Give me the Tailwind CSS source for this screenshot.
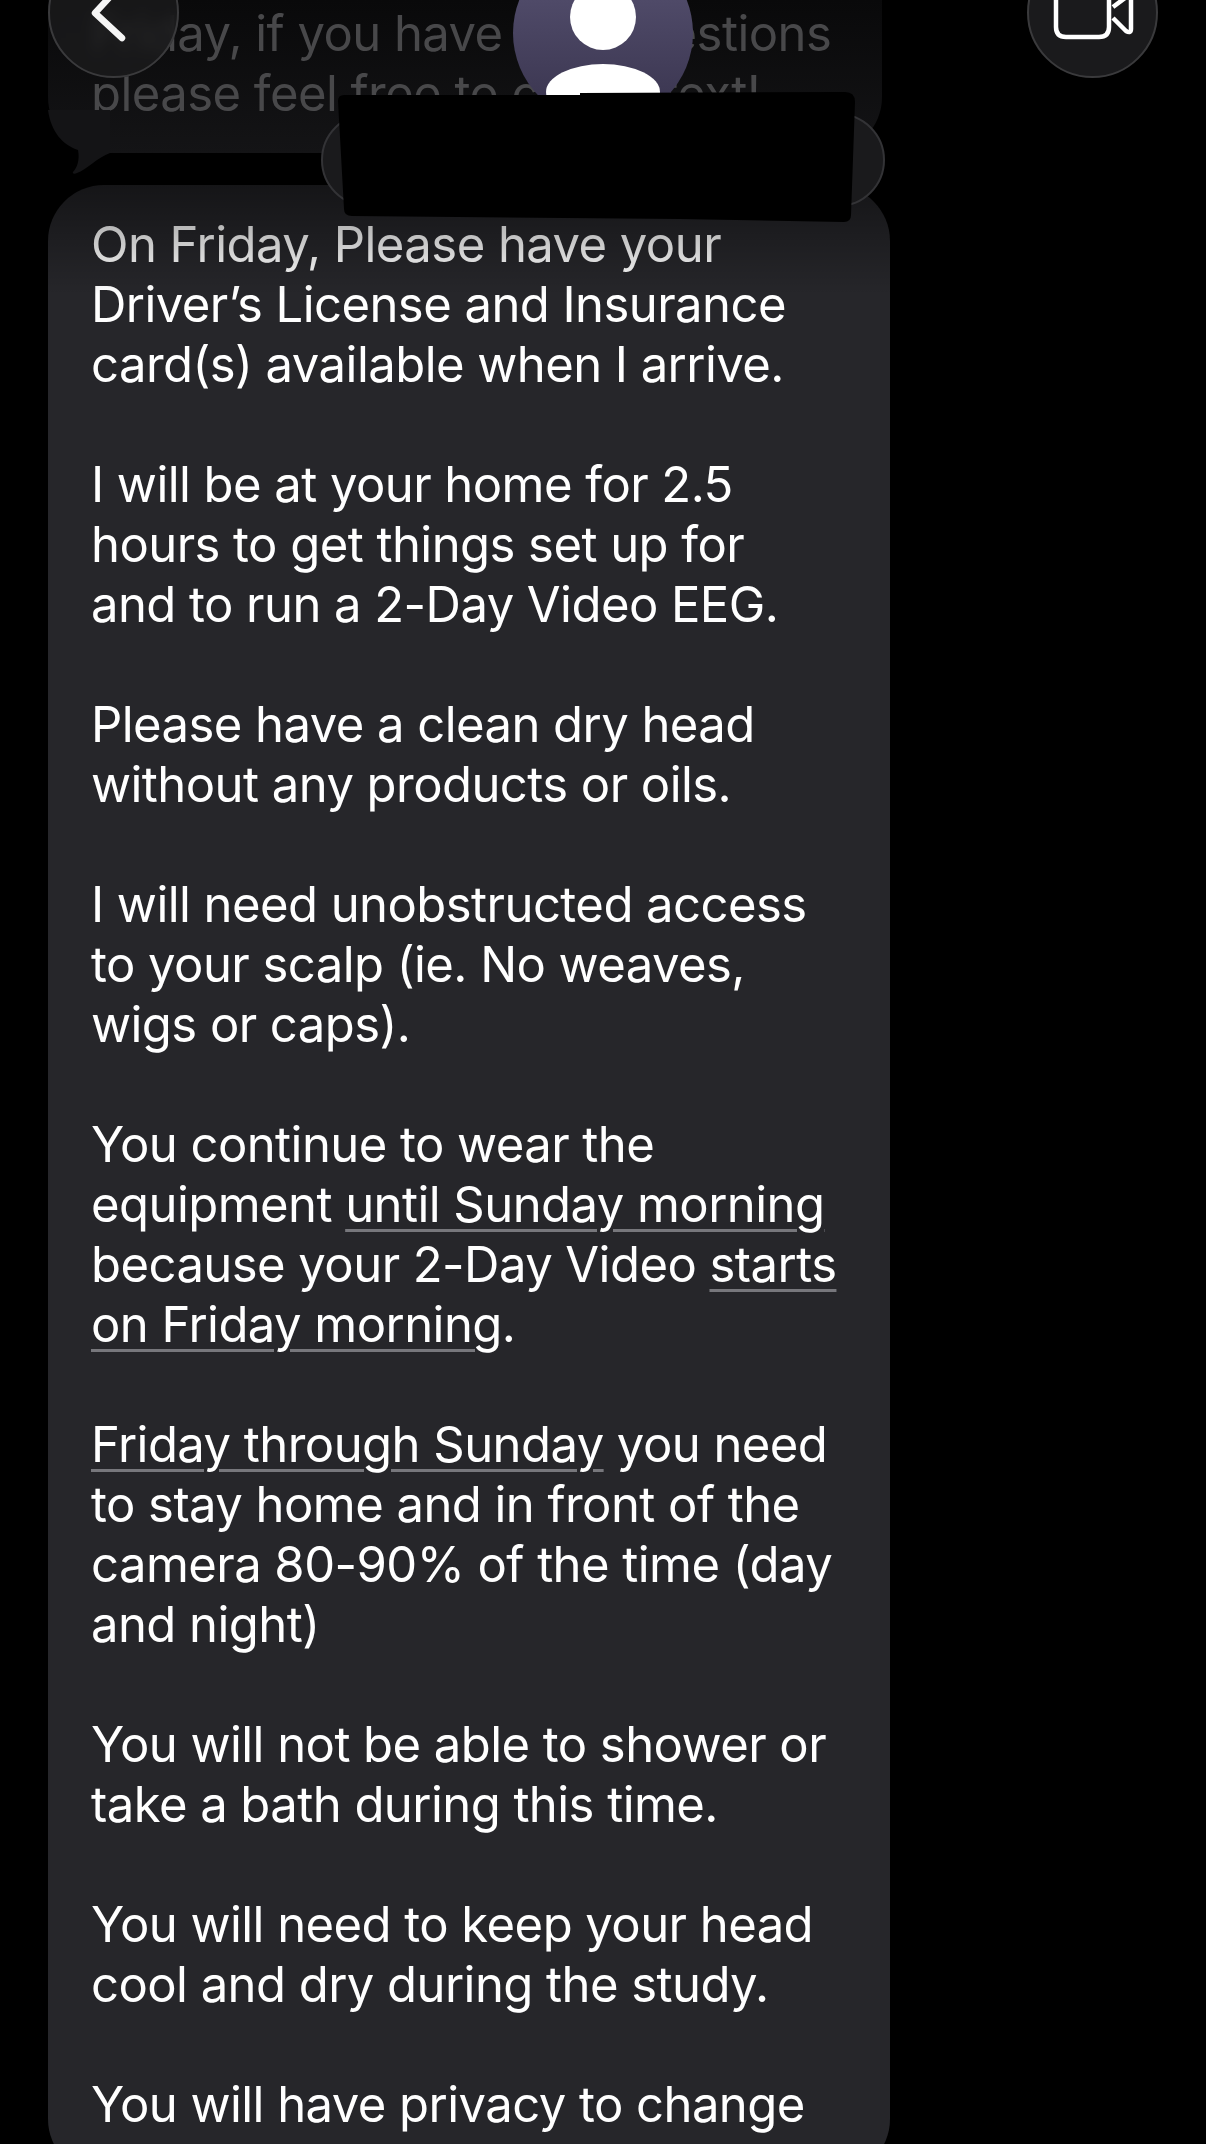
<!DOCTYPE html>
<html lang="en">
<head>
    <meta charset="UTF-8">
    <title>Messages</title>
    <script src="https://cdn.jsdelivr.net/npm/@tailwindcss/browser@4"></script>
</head>
<body class="bg-black">
<div class="relative w-[1206px] h-[2144px] overflow-hidden bg-black font-['Inter',sans-serif] text-[49px] leading-[60px] tracking-[-0.55px] whitespace-nowrap">

    <!-- previous message -->
    <div class="relative ml-[48px] w-[834px] h-[153px] flex flex-col justify-end pl-[43px] pb-[29px] bg-gradient-to-b from-[#09090a] to-[#141416] rounded-b-[56px] text-[#48484a]">
        <p>Friday, if you have any questions</p>
        <p>please feel free to call or text!</p>
        <svg class="absolute left-0 top-[110px]" width="70" height="66" viewBox="0 0 70 66"><path d="M0 0 C3 22 15 35 30 40 C32 50 29 58 25 62 C24 64 27 64 29 63 C38 60 50 47 62 43 L62 0 Z" fill="#141416"/></svg>
    </div>

    <!-- long message -->
    <div class="mt-[32px] ml-[48px] w-[842px] pl-[43px] pt-[30px] pb-[40px] bg-[#26262a] rounded-[56px] text-white">
        <p>On Friday, Please have your<br>Driver’s License and Insurance<br>card(s) available when I arrive.</p>
        <p class="mt-[60px]">I will be at your home for 2.5<br>hours to get things set up for<br>and to run a 2-Day Video EEG.</p>
        <p class="mt-[60px]">Please have a clean dry head<br>without any products or oils.</p>
        <p class="mt-[60px]">I will need unobstructed access<br>to your scalp (ie. No weaves,<br>wigs or caps).</p>
        <p class="mt-[60px]">You continue to wear the<br>equipment <span class="underline decoration-[#77777c] decoration-[3px] underline-offset-[7px]">until Sunday morning</span><br>because your 2-Day Video <span class="underline decoration-[#77777c] decoration-[3px] underline-offset-[7px]">starts</span><br><span class="underline decoration-[#77777c] decoration-[3px] underline-offset-[7px]">on Friday morning</span>.</p>
        <p class="mt-[60px]"><span class="underline decoration-[#77777c] decoration-[3px] underline-offset-[7px]">Friday through Sunday</span> you need<br>to stay home and in front of the<br>camera 80-90% of the time (day<br>and night)</p>
        <p class="mt-[60px]">You will not be able to shower or<br>take a bath during this time.</p>
        <p class="mt-[60px]">You will need to keep your head<br>cool and dry during the study.</p>
        <p class="mt-[60px]">You will have privacy to change</p>
    </div>

    <!-- fade under the nav bar -->
    <div class="absolute left-0 top-[185px] w-full h-[110px] bg-gradient-to-b from-black/45 to-black/0"></div>

    <!-- back button -->
    <div class="absolute left-[48px] top-[-53px] w-[131px] h-[131px] rounded-full bg-[#1c1c1e]/75 backdrop-blur-[7px] border-2 border-[#3a3a3c]"></div>
    <svg class="absolute left-[86px] top-0" width="46" height="46" viewBox="0 0 46 46"><path d="M34 -14 L9 13 L36 38" fill="none" stroke="#f5f5f5" stroke-width="6.5" stroke-linecap="round" stroke-linejoin="round"/></svg>

    <!-- avatar -->
    <div class="absolute left-[513px] top-[-57px] w-[180px] h-[180px] rounded-full overflow-hidden bg-gradient-to-b from-[#5a5575] to-[#38334d]">
        <div class="absolute left-[57px] top-[41px] w-[66px] h-[66px] rounded-full bg-white"></div>
        <div class="absolute left-[33px] top-[121px] w-[114px] h-[56px] rounded-[50%] bg-white"></div>
    </div>

    <!-- video button -->
    <div class="absolute left-[1027px] top-[-53px] w-[131px] h-[131px] rounded-full bg-[#1a1a1c] border-2 border-[#3a3a3c]"></div>
    <svg class="absolute left-[1050px] top-0" width="90" height="44" viewBox="0 0 90 44"><path d="M6 -10 L6 27 Q6 37 16 37 L49 37 Q59 37 59 27 L59 -10" fill="none" stroke="#fff" stroke-width="4.5"/><path d="M63 7 L75 -2 L81 -6 L81 29 Q81 34 76 31 L63 18" fill="none" stroke="#fff" stroke-width="4.5" stroke-linejoin="round"/></svg>

    <!-- timestamp pill, covered by the black patch -->
    <div class="absolute left-[321px] top-[113px] w-[564px] h-[94px] rounded-full bg-[#1a1a1c] border-2 border-[#333336]"></div>
    <svg class="absolute left-[330px] top-[85px]" width="535" height="145" viewBox="0 0 535 145"><path d="M8 16 Q8 10 14 10 L250 10 L250 8 L515 7 Q525 7 525 17 L521 130 Q521 137 514 137 L350 134 L22 131 Q14 131 14 124 Z" fill="#000"/></svg>
</div>
</body>
</html>
